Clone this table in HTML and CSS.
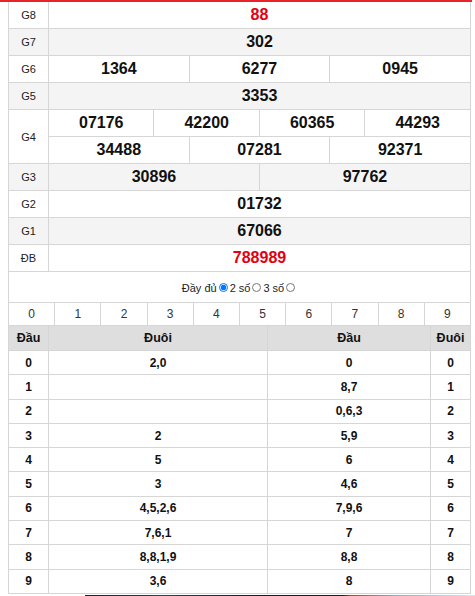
FILE: index.html
```html
<!DOCTYPE html>
<html>
<head>
<meta charset="utf-8">
<link rel="stylesheet" href="styles.css">
</head>
<body>
<div class="topline"></div>
<table class="kq">
  <colgroup>
    <col class="c-lbl">
    <col><col><col><col><col><col><col><col><col><col><col><col>
  </colgroup>
  <tr><td class="lbl">G8</td><td colspan="12" class="num red">88</td></tr>
  <tr class="alt"><td class="lbl">G7</td><td colspan="12" class="num">302</td></tr>
  <tr><td class="lbl">G6</td><td colspan="4" class="num">1364</td><td colspan="4" class="num">6277</td><td colspan="4" class="num">0945</td></tr>
  <tr class="alt"><td class="lbl">G5</td><td colspan="12" class="num">3353</td></tr>
  <tr><td class="lbl" rowspan="2">G4</td><td colspan="3" class="num">07176</td><td colspan="3" class="num">42200</td><td colspan="3" class="num">60365</td><td colspan="3" class="num">44293</td></tr>
  <tr><td colspan="4" class="num">34488</td><td colspan="4" class="num">07281</td><td colspan="4" class="num">92371</td></tr>
  <tr class="alt"><td class="lbl">G3</td><td colspan="6" class="num">30896</td><td colspan="6" class="num">97762</td></tr>
  <tr><td class="lbl">G2</td><td colspan="12" class="num">01732</td></tr>
  <tr class="alt"><td class="lbl">G1</td><td colspan="12" class="num">67066</td></tr>
  <tr><td class="lbl">ĐB</td><td colspan="12" class="num red">788989</td></tr>
</table>
<div class="opts">
  <label class="opt">Đầy đủ<input type="radio" name="n" checked></label>
  <label class="opt">2 số<input type="radio" name="n"></label>
  <label class="opt">3 số<input type="radio" name="n"></label>
</div>
<table class="digits">
  <tr><td>0</td><td>1</td><td>2</td><td>3</td><td>4</td><td>5</td><td>6</td><td>7</td><td>8</td><td>9</td></tr>
</table>
<table class="loto">
  <colgroup><col class="c1"><col class="c2"><col class="c3"><col class="c4"></colgroup>
  <tr class="hd"><th>Đầu</th><th>Đuôi</th><th>Đầu</th><th>Đuôi</th></tr>
  <tr><td>0</td><td>2,0</td><td>0</td><td>0</td></tr>
  <tr><td>1</td><td></td><td>8,7</td><td>1</td></tr>
  <tr><td>2</td><td></td><td>0,6,3</td><td>2</td></tr>
  <tr><td>3</td><td>2</td><td>5,9</td><td>3</td></tr>
  <tr><td>4</td><td>5</td><td>6</td><td>4</td></tr>
  <tr><td>5</td><td>3</td><td>4,6</td><td>5</td></tr>
  <tr><td>6</td><td>4,5,2,6</td><td>7,9,6</td><td>6</td></tr>
  <tr><td>7</td><td>7,6,1</td><td>7</td><td>7</td></tr>
  <tr><td>8</td><td>8,8,1,9</td><td>8,8</td><td>8</td></tr>
  <tr><td>9</td><td>3,6</td><td>8</td><td>9</td></tr>
</table>
<div class="banner"></div>
</body>
</html>
```
FILE: styles.css
```css
html, body {
  margin: 0;
  padding: 0;
  background: #fff;
  font-family: "Liberation Sans", Arial, sans-serif;
  color: #111;
}
.topline {
  width: 472px;
  height: 2px;
  background: #e8232a;
}
table {
  border-collapse: collapse;
  table-layout: fixed;
  margin-left: 8px;
  width: 463px;
}
td, th {
  border: 1px solid #d6d6d6;
  padding: 0;
  text-align: center;
}
.kq {
  border-top: hidden;
}
.kq .c-lbl { width: 40px; }
.kq td {
  height: 26px;
}
.kq .lbl {
  font-size: 11px;
  color: #222;
}
.kq .num {
  font-size: 16px;
  font-weight: bold;
  color: #111;
}
.kq .num.red { color: #e3000f; }
.kq .alt td { background: #f4f4f4; }
.opts {
  margin-left: 8px;
  width: 461px;
  height: 29px;
  border-left: 1px solid #d6d6d6;
  border-right: 1px solid #d6d6d6;
  display: flex;
  justify-content: center;
  align-items: center;
  font-size: 11px;
  color: #222;
  padding-top: 1px;
  box-sizing: content-box;
}
.opt {
  display: inline-flex;
  align-items: center;
}
.opt input {
  width: 9px;
  height: 9px;
  margin: 0 2px 0 2px;
}
.digits td {
  height: 22px;
  font-size: 12px;
  color: #333;
}
.loto {
  border-top: hidden;
}
.loto .c1 { width: 40px; }
.loto .c2 { width: 219px; }
.loto .c3 { width: 163px; }
.loto .c4 { width: 40px; }
.loto th {
  height: 24px;
  background: #dedede;
  font-size: 12.5px;
  font-weight: bold;
  color: #111;
}
.loto td {
  height: 23.3px;
  font-size: 12px;
  font-weight: bold;
  color: #111;
}
.banner {
  margin-left: 85px;
  width: 390px;
  height: 3px;
  margin-top: 1px;
  background: linear-gradient(90deg, #1a1d2e 0%, #2a3a7a 20%, #141726 45%, #1b1b22 66%, #c23a2a 68%, #7fb2d9 80%, #d9e6ef 100%);
}
```
